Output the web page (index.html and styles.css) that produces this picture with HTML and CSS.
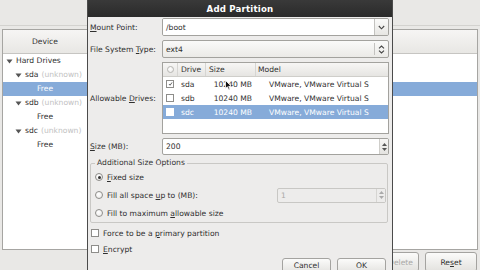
FILE: index.html
```html
<!DOCTYPE html>
<html>
<head>
<meta charset="utf-8">
<title>Add Partition</title>
<link rel="stylesheet" href="styles.css">
</head>
<body>
<div class="app">
  <div class="app-top"></div>
  <div class="tree">
    <div class="tree-head"><span class="head-device">Device</span></div>
    <div class="tree-body">
      <div class="trow lvl0"><span class="exp"><svg width="7" height="7" viewBox="0 0 7 7"><path d="M0.5 1.5 H6.5 L3.5 5.5 Z" fill="#555"/></svg></span>Hard Drives</div>
      <div class="trow lvl1"><span class="exp"><svg width="7" height="7" viewBox="0 0 7 7"><path d="M0.5 1.5 H6.5 L3.5 5.5 Z" fill="#555"/></svg></span>sda <span class="dim">(unknown)</span></div>
      <div class="trow lvl2 sel">Free</div>
      <div class="trow lvl1"><span class="exp"><svg width="7" height="7" viewBox="0 0 7 7"><path d="M0.5 1.5 H6.5 L3.5 5.5 Z" fill="#555"/></svg></span>sdb <span class="dim">(unknown)</span></div>
      <div class="trow lvl2">Free</div>
      <div class="trow lvl1"><span class="exp"><svg width="7" height="7" viewBox="0 0 7 7"><path d="M0.5 1.5 H6.5 L3.5 5.5 Z" fill="#555"/></svg></span>sdc <span class="dim">(unknown)</span></div>
      <div class="trow lvl2">Free</div>
    </div>
  </div>
  <div class="app-actions">
    <button class="btn btn-delete" disabled>Delete</button>
    <button class="btn btn-reset">Re<u>s</u>et</button>
  </div>
</div>

<div class="dialog">
  <div class="titlebar">Add Partition</div>
  <div class="dlg-body">
    <div class="form">
      <label class="lbl"><u>M</u>ount Point:</label>
      <div class="combo entry-combo">
        <span class="val">/boot</span>
        <span class="cbtn"><svg width="7" height="5" viewBox="0 0 7 5"><path d="M0.8 1 L3.5 3.8 L6.2 1" fill="none" stroke="#444" stroke-width="1.1"/></svg></span>
      </div>
      <label class="lbl">File System <u>T</u>ype:</label>
      <div class="combo btn-combo">
        <span class="val">ext4</span>
        <span class="cbtn"><svg width="7" height="9" viewBox="0 0 7 9"><path d="M1 3.4 L3.5 1 L6 3.4 M1 5.6 L3.5 8 L6 5.6" fill="none" stroke="#444" stroke-width="1.1"/></svg></span>
      </div>
      <label class="lbl">Allowable <u>D</u>rives:</label>
      <div class="drives">
        <div class="drow dhead">
          <span class="c0"><span class="radio small"></span></span>
          <span class="c1">Drive</span>
          <span class="c2">Size</span>
          <span class="c3">Model</span>
        </div>
        <div class="drow">
          <span class="c0"><span class="cb on"><svg width="8" height="8" viewBox="0 0 8 8"><path d="M1.5 4 L3.3 6 L6.5 1.5" fill="none" stroke="#333" stroke-width="1.2"/></svg></span></span>
          <span class="c1">sda</span>
          <span class="c2">10240 MB</span>
          <span class="c3">VMware, VMware Virtual S</span>
        </div>
        <div class="drow">
          <span class="c0"><span class="cb"></span></span>
          <span class="c1">sdb</span>
          <span class="c2">10240 MB</span>
          <span class="c3">VMware, VMware Virtual S</span>
        </div>
        <div class="drow dsel">
          <span class="c0"><span class="cb white"></span></span>
          <span class="c1">sdc</span>
          <span class="c2">10240 MB</span>
          <span class="c3">VMware, VMware Virtual S</span>
        </div>
      </div>
      <label class="lbl"><u>S</u>ize (MB):</label>
      <div class="spin">
        <span class="val">200</span>
        <span class="spinbtns">
          <svg width="5" height="3" viewBox="0 0 5 3"><path d="M0 3 L2.5 0 L5 3 Z" fill="#555"/></svg>
          <svg width="5" height="3" viewBox="0 0 5 3"><path d="M0 0 L2.5 3 L5 0 Z" fill="#555"/></svg>
        </span>
      </div>
    </div>

    <fieldset class="sizeopts">
      <legend>Additional Size Options</legend>
      <div class="opt"><span class="radio on"></span><span><u>F</u>ixed size</span></div>
      <div class="opt opt-spin">
        <span class="optlbl"><span class="radio"></span><span>Fill all space <u>u</u>p to (MB):</span></span>
        <div class="spin disabled">
          <span class="val">1</span>
          <span class="spinbtns">
            <svg width="5" height="3" viewBox="0 0 5 3"><path d="M0 3 L2.5 0 L5 3 Z" fill="#aaa"/></svg>
            <svg width="5" height="3" viewBox="0 0 5 3"><path d="M0 0 L2.5 3 L5 0 Z" fill="#aaa"/></svg>
          </span>
        </div>
      </div>
      <div class="opt"><span class="radio"></span><span>Fill to maximum <u>a</u>llowable size</span></div>
    </fieldset>

    <div class="check"><span class="cb"></span><span>Force to be a <u>p</u>rimary partition</span></div>
    <div class="check"><span class="cb"></span><span><u>E</u>ncrypt</span></div>

    <div class="actions">
      <button class="btn">Cancel</button>
      <button class="btn">OK</button>
    </div>
  </div>
  <svg class="pointer" width="7" height="11" viewBox="0 0 7 11"><path d="M0.5 0.5 L0.5 8.5 L2.4 6.8 L3.8 10 L5 9.4 L3.7 6.3 L6.3 6.3 Z" fill="#111" stroke="#fff" stroke-width="0.8"/></svg>
</div>
</body>
</html>
```

FILE: styles.css
```css
* { box-sizing: border-box; }

html, body {
  margin: 0;
  padding: 0;
}

body {
  width: 480px;
  height: 270px;
  overflow: hidden;
  position: relative;
  background: #e9e8e6;
  font-family: "DejaVu Sans", "Noto Sans", sans-serif;
  font-size: 7.6px;
  color: #2f2f2f;
}

u { text-decoration: underline; text-underline-offset: 1px; }

/* ---------- background application ---------- */
.app {
  display: flex;
  flex-direction: column;
  height: 270px;
}

.app-top {
  height: 26px;
  border-bottom: 1px solid #d3d2cf;
  margin-bottom: 3px;
  flex: none;
}

.tree {
  flex: none;
  height: 221px;
  margin: 0 2px;
  border: 1px solid #a6a5a2;
  background: #fff;
  display: flex;
  flex-direction: column;
}

.tree-head {
  height: 24px;
  flex: none;
  background: linear-gradient(#f6f5f4, #e8e7e4);
  border-bottom: 1px solid #c6c5c2;
  display: flex;
  align-items: center;
}

.head-device {
  width: 84px;
  text-align: center;
  color: #333;
}

.tree-body {
  display: flex;
  flex-direction: column;
}

.trow {
  height: 14px;
  line-height: 14px;
  white-space: nowrap;
  display: flex;
  align-items: center;
}

.trow.lvl0 { padding-left: 3px; }
.trow.lvl1 { padding-left: 12px; }
.trow.lvl2 { padding-left: 34px; }

.trow.sel {
  background: #86abd9;
  color: #fff;
}

.exp {
  width: 10px;
  display: inline-flex;
  align-items: center;
  justify-content: flex-start;
}

.dim {
  color: #c2c2c2;
  margin-left: 3px;
}

.app-actions {
  flex: none;
  display: flex;
  justify-content: flex-end;
  gap: 6px;
  padding: 2px 3px 0 0;
}

.btn {
  font: inherit;
  color: #2f2f2f;
  height: 20px;
  padding: 0;
  background: linear-gradient(#fbfbfa, #e3e2df);
  border: 1px solid #a4a3a0;
  border-radius: 3px;
}

.btn-delete {
  width: 50px;
  color: #a9a8a6;
  text-align: right;
  padding-right: 5px;
}

.btn-reset { width: 52px; }

/* ---------- dialog ---------- */
.dialog {
  position: absolute;
  left: 87px;
  top: -5px;
  width: 306px;
  height: 290px;
  background: #edeceb;
  border: 1px solid #4b4b4b;
  border-radius: 5px 5px 0 0;
}

.titlebar {
  height: 21px;
  padding-top: 5px;
  line-height: 16px;
  text-align: center;
  color: #fff;
  font-weight: bold;
  font-size: 8.6px;
  background: linear-gradient(#3d3d3d, #2a2a2a);
  border-radius: 4px 4px 0 0;
  letter-spacing: 0.2px;
}

.dlg-body {
  padding: 1px 3px 0 2px;
}

.form {
  display: grid;
  grid-template-columns: 72px 227px;
  grid-template-rows: 18px 18px 72px 17px;
  row-gap: 4px;
}

.lbl {
  align-self: center;
  white-space: nowrap;
}

.combo {
  display: flex;
  border: 1px solid #a3a29e;
  border-radius: 2px;
  overflow: hidden;
}

.combo .val {
  flex: 1;
  padding-left: 3px;
  display: flex;
  align-items: center;
}

.entry-combo .val { background: #fff; }
.btn-combo { background: linear-gradient(#fafaf9, #ebeae7); }

.cbtn {
  width: 14px;
  display: flex;
  align-items: center;
  justify-content: center;
  border-left: 1px solid #c3c2bf;
  margin: 2px 0;
}

.entry-combo .cbtn {
  margin: 0;
  background: linear-gradient(#fafaf9, #e7e6e3);
}

/* drives table */
.drives {
  border: 1px solid #a3a29e;
  background: #fff;
  display: flex;
  flex-direction: column;
}

.drow {
  display: grid;
  grid-template-columns: 14px 28px 50px 1fr;
  height: 14px;
  align-items: center;
  white-space: nowrap;
}

.drow > span {
  overflow: hidden;
  height: 100%;
  display: flex;
  align-items: center;
}

.dhead {
  background: linear-gradient(#f7f6f5, #e6e5e2);
  border-bottom: 1px solid #cfceca;
  height: 14px;
}

.dhead > span + span { border-left: 1px solid #d6d5d2; }

.drow .c0 { justify-content: center; }
.drow .c1 { padding-left: 3px; }
.drow .c2 { padding-left: 3px; }
.drow .c3 { padding-left: 2px; }

.drow:not(.dhead) .c1 { padding-left: 4px; }
.drow:not(.dhead) .c2 { justify-content: flex-end; padding-right: 3px; padding-left: 0; }
.drow:not(.dhead) .c3 { padding-left: 14px; }

.dsel {
  background: #86abd9;
  color: #fff;
}

/* spin */
.spin {
  display: flex;
  border: 1px solid #a3a29e;
  border-radius: 2px;
  background: #fff;
}

.spin .val {
  flex: 1;
  padding-left: 3px;
  display: flex;
  align-items: center;
}

.spinbtns {
  width: 9px;
  display: flex;
  flex-direction: column;
  align-items: center;
  justify-content: center;
  gap: 2px;
  background: linear-gradient(#f7f6f5, #e4e3e0);
  border-left: 1px solid #cfceca;
}

.spin.disabled {
  width: 109px;
  height: 15px;
  background: #edeceb;
  border-color: #c8c7c4;
  color: #a9a8a6;
}

.spin.disabled .spinbtns {
  background: #edeceb;
  border-left-color: #d6d5d2;
}

/* radio / checkbox */
.radio {
  width: 8px;
  height: 8px;
  border-radius: 50%;
  border: 1px solid #8e8d8a;
  background: radial-gradient(circle at 40% 35%, #fff, #e9e8e6);
  display: inline-flex;
  align-items: center;
  justify-content: center;
  flex: none;
}

.radio.small {
  width: 7px;
  height: 7px;
  border-color: #b6b5b2;
}

.radio.on::after {
  content: "";
  width: 3px;
  height: 3px;
  border-radius: 50%;
  background: #333;
}

.cb {
  width: 8px;
  height: 8px;
  border: 1px solid #8e8d8a;
  background: #fff;
  display: inline-flex;
  align-items: center;
  justify-content: center;
  flex: none;
}

.cb svg { display: block; margin-left: 1px; }

.cb.white {
  background: #fff;
  border-color: #fff;
}

/* size options frame */
.sizeopts {
  margin: 3px 1px 0 0;
  padding: 0 1px 0 4px;
  border: 1px solid #c9c8c5;
  border-radius: 2px;
  min-width: 0;
}

.sizeopts legend {
  padding: 0 2px;
  margin-left: 0;
  line-height: 10px;
  color: #333;
}

.opt {
  height: 18px;
  display: flex;
  align-items: center;
  gap: 4px;
  white-space: nowrap;
}

.opt-spin {
  justify-content: space-between;
}

.optlbl {
  display: flex;
  align-items: center;
  gap: 4px;
}

.check {
  height: 16px;
  display: flex;
  align-items: center;
  gap: 4px;
  padding-left: 1px;
}

.sizeopts + .check { margin-top: 2px; }

.actions {
  margin-top: 1px;
  display: flex;
  justify-content: flex-end;
  gap: 6px;
  padding-right: 3px;
}

.actions .btn {
  width: 49px;
  height: 16px;
  padding: 0;
  line-height: 14px;
}

.pointer {
  position: absolute;
  left: 137px;
  top: 84px;
}
```
